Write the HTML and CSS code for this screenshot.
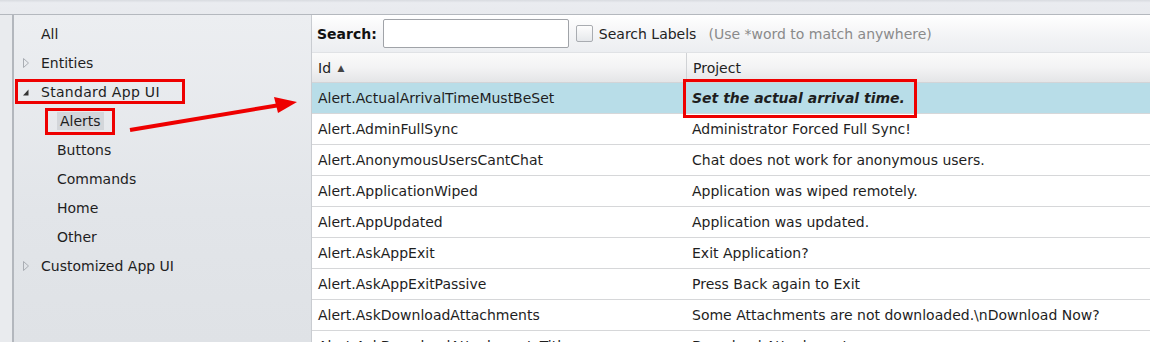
FILE: index.html
```html
<!DOCTYPE html>
<html>
<head>
<meta charset="utf-8">
<link rel="stylesheet" href="styles.css">
</head>
<body>
<div class="topstrip"></div>
<div class="main">
  <div class="leftstrip"></div>
  <div class="tree">
    <div class="node lvl1"><span class="tw"></span><span>All</span></div>
    <div class="node lvl1"><span class="tw"><svg width="8" height="12" viewBox="0 0 8 12"><path d="M1.5 1.5 L6.5 6 L1.5 10.5 Z" fill="none" stroke="#a9adb3" stroke-width="1"/></svg></span><span>Entities</span></div>
    <div class="node lvl1"><span class="tw"><svg width="8" height="12" viewBox="0 0 8 12"><path d="M6.5 3.5 L6.5 9.5 L1 9.5 Z" fill="#333"/></svg></span><span class="wide">Standard App UI</span></div>
    <div class="node lvl2"><span class="sel">Alerts</span></div>
    <div class="node lvl2"><span>Buttons</span></div>
    <div class="node lvl2"><span>Commands</span></div>
    <div class="node lvl2"><span>Home</span></div>
    <div class="node lvl2"><span>Other</span></div>
    <div class="node lvl1"><span class="tw"><svg width="8" height="12" viewBox="0 0 8 12"><path d="M1.5 1.5 L6.5 6 L1.5 10.5 Z" fill="none" stroke="#a9adb3" stroke-width="1"/></svg></span><span>Customized App UI</span></div>
  </div>
  <div class="grid">
    <div class="searchbar">
      <span class="slabel">Search:</span>
      <span class="sinput"></span>
      <span class="cbox"></span>
      <span class="cblabel">Search Labels</span>
      <span class="hint">(Use *word to match anywhere)</span>
    </div>
    <div class="row head">
      <div class="c1">Id <span class="sort">▲</span></div>
      <div class="c2">Project</div>
    </div>
    <div class="row selected">
      <div class="c1">Alert.ActualArrivalTimeMustBeSet</div>
      <div class="c2"><b><i>Set the actual arrival time.</i></b></div>
    </div>
    <div class="row"><div class="c1">Alert.AdminFullSync</div><div class="c2">Administrator Forced Full Sync!</div></div>
    <div class="row"><div class="c1">Alert.AnonymousUsersCantChat</div><div class="c2">Chat does not work for anonymous users.</div></div>
    <div class="row"><div class="c1">Alert.ApplicationWiped</div><div class="c2">Application was wiped remotely.</div></div>
    <div class="row"><div class="c1">Alert.AppUpdated</div><div class="c2">Application was updated.</div></div>
    <div class="row"><div class="c1">Alert.AskAppExit</div><div class="c2">Exit Application?</div></div>
    <div class="row"><div class="c1">Alert.AskAppExitPassive</div><div class="c2">Press Back again to Exit</div></div>
    <div class="row"><div class="c1">Alert.AskDownloadAttachments</div><div class="c2">Some Attachments are not downloaded.\nDownload Now?</div></div>
    <div class="row"><div class="c1">Alert.AskDownloadAttachmentsTitle</div><div class="c2">Download Attachments</div></div>
  </div>
</div>
<div class="mark m1"></div>
<div class="mark m2"></div>
<div class="mark m3"></div>
<svg class="arrow" width="1150" height="342" viewBox="0 0 1150 342">
  <line x1="130" y1="130" x2="280" y2="105" stroke="#ee0000" stroke-width="4"/>
  <path d="M274 97 L297 102 L278 113 Z" fill="#ee0000"/>
</svg>
</body>
</html>
```
FILE: styles.css
```css
html, body {
  margin: 0;
  padding: 0;
  width: 1150px;
  height: 342px;
  overflow: hidden;
  background: #e8eaee;
  font-family: "DejaVu Sans", Verdana, sans-serif;
  font-size: 14px;
  color: #1e1e1e;
  position: relative;
}
.topstrip {
  height: 14px;
  background: linear-gradient(#d8dbe0, #eaecf0 20%, #e8eaee);
  border-bottom: 1px solid #b4b8be;
}
.main {
  display: flex;
  height: 327px;
}
.leftstrip {
  width: 12px;
  background: #e9ebee;
  border-right: 2px solid #b3b7bd;
}
.tree {
  width: 297px;
  padding-top: 4px;
  background: linear-gradient(#eceef1, #e2e5e9 60%, #dfe2e6);
  box-sizing: border-box;
}
.node {
  height: 29px;
  display: flex;
  align-items: center;
}
.lvl1 { padding-left: 8px; }
.lvl2 { padding-left: 43px; }
.tw {
  width: 19px;
  display: flex;
  align-items: center;
}
.wide { letter-spacing: 0.3px; }
.sel {
  background: #d3d6da;
  padding: 1px 3px;
}
.grid {
  flex: 1;
  background: #fff;
  border-left: 1px solid #c9ccd1;
}
.searchbar {
  height: 37px;
  display: flex;
  align-items: center;
  padding-left: 5px;
  background: linear-gradient(#ffffff, #f2f3f5 60%, #eceef1);
  border-bottom: 1px solid #e0e2e5;
}
.slabel { font-weight: bold; color: #111; }
.sinput {
  width: 184px;
  height: 27px;
  margin-left: 6px;
  border: 1px solid #a0a3a8;
  border-radius: 2px;
  background: #fff;
  flex: none;
}
.cbox {
  width: 15px;
  height: 15px;
  margin-left: 7px;
  border: 1px solid #a9acb1;
  border-radius: 2px;
  background: linear-gradient(#fdfdfd, #e6e8eb);
  flex: none;
}
.cblabel { margin-left: 6px; color: #222; }
.hint { margin-left: 12px; color: #8a8a8a; }
.row {
  display: flex;
  height: 30px;
  border-bottom: 1px solid #d6d7d9;
  align-items: center;
  white-space: nowrap;
}
.row.head {
  height: 29px;
  background: linear-gradient(#fafafa, #f3f3f4 50%, #e4e5e7);
  border-bottom: 1px solid #d2d4d7;
  color: #222;
}
.row.head .c2 { border-left: 1px solid #d0d2d5; height: 100%; display: flex; align-items: center; }
.sort { font-size: 9px; color: #444; vertical-align: 2px; margin-left: 2px; }
.row.selected { background: #b8dde8; }
.c1 { width: 368px; padding-left: 6px; flex: none; }
.c2 { flex: 1; padding-left: 6px; }
.mark {
  position: absolute;
  border: 3px solid #ee0000;
  box-sizing: border-box;
}
.m1 { left: 15px; top: 79px; width: 170px; height: 25px; }
.m2 { left: 45px; top: 108px; width: 70px; height: 27px; }
.m3 { left: 683px; top: 79px; width: 234px; height: 39px; }
.arrow { position: absolute; left: 0; top: 0; pointer-events: none; }
```
